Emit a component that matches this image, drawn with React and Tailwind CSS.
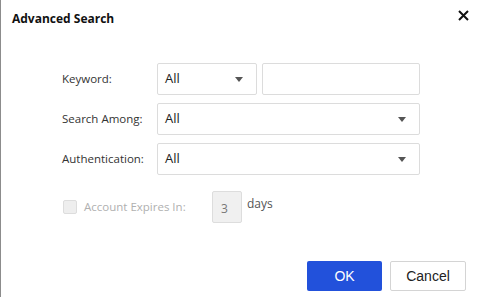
import React from 'react';

const Caret = () => (
  <svg width="8" height="5" viewBox="0 0 8 5" className="shrink-0">
    <path d="M0 0h8L4 5z" fill="#555" />
  </svg>
);

const SelectBox = ({ className = '' }) => (
  <div className={`h-8 flex items-center justify-between pl-[7px] pr-[13px] border border-[#dcdcdc] rounded-[2px] bg-white ${className}`}>
    <span className="text-[13px] text-[#222]">All</span>
    <Caret />
  </div>
);

const Row = ({ label, children }) => (
  <div className="flex items-center h-8">
    <span className="w-[95px] text-[11.5px] text-[#333]">{label}</span>
    {children}
  </div>
);

const App = () => {
  return (
    <div
      className="w-[479px] h-[297px] bg-white border-l border-[#8c8c8c] flex flex-col overflow-hidden"
      style={{ fontFamily: '"Open Sans", "Noto Sans", sans-serif' }}
    >
      <div className="flex items-center justify-between h-[34px] pt-[3px] pl-[11px] pr-[10px]">
        <h2 className="text-[12px] font-bold text-[#111]">Advanced Search</h2>
        <svg width="11" height="11" viewBox="0 0 11 11" className="-mt-[6px]">
          <path d="M1 1l9 9M10 1l-9 9" stroke="#111" strokeWidth="2" />
        </svg>
      </div>

      <div className="flex flex-col gap-2 pl-[61px] pt-[29px]">
        <Row label="Keyword:">
          <SelectBox className="w-[100px]" />
          <div className="ml-[5px] w-[158px] h-8 border border-[#dcdcdc] rounded-[2px]" />
        </Row>
        <Row label="Search Among:">
          <SelectBox className="w-[263px]" />
        </Row>
        <Row label="Authentication:">
          <SelectBox className="w-[263px]" />
        </Row>

        <div className="flex items-center mt-2 h-8">
          <span className="ml-[1px] w-[14px] h-[14px] bg-[#eeeeee] border border-[#dddddd] rounded-[2px]" />
          <span className="ml-[7px] w-[128px] text-[11.5px] text-[#b0b0b0]">Account Expires In:</span>
          <div className="w-[30px] h-8 flex items-center pl-[8px] pt-[3px] bg-[#f0f0f0] border border-[#dddddd] rounded-[2px] text-[12px] text-[#777]">
            3
          </div>
          <span className="ml-[5px] -mt-[6px] text-[12px] text-[#555]">days</span>
        </div>
      </div>

      <div className="mt-auto mb-[6px] flex justify-end gap-2 pr-[13px]" style={{ fontFamily: '"Liberation Sans", Arial, sans-serif' }}>
        <button className="w-[75px] h-[30px] bg-[#2251db] text-white text-[14px] rounded-[2px]">OK</button>
        <button className="w-[76px] h-[30px] bg-white border border-[#d4d4d4] text-[#222] text-[14px] rounded-[2px]">Cancel</button>
      </div>
    </div>
  );
};

export default App;
